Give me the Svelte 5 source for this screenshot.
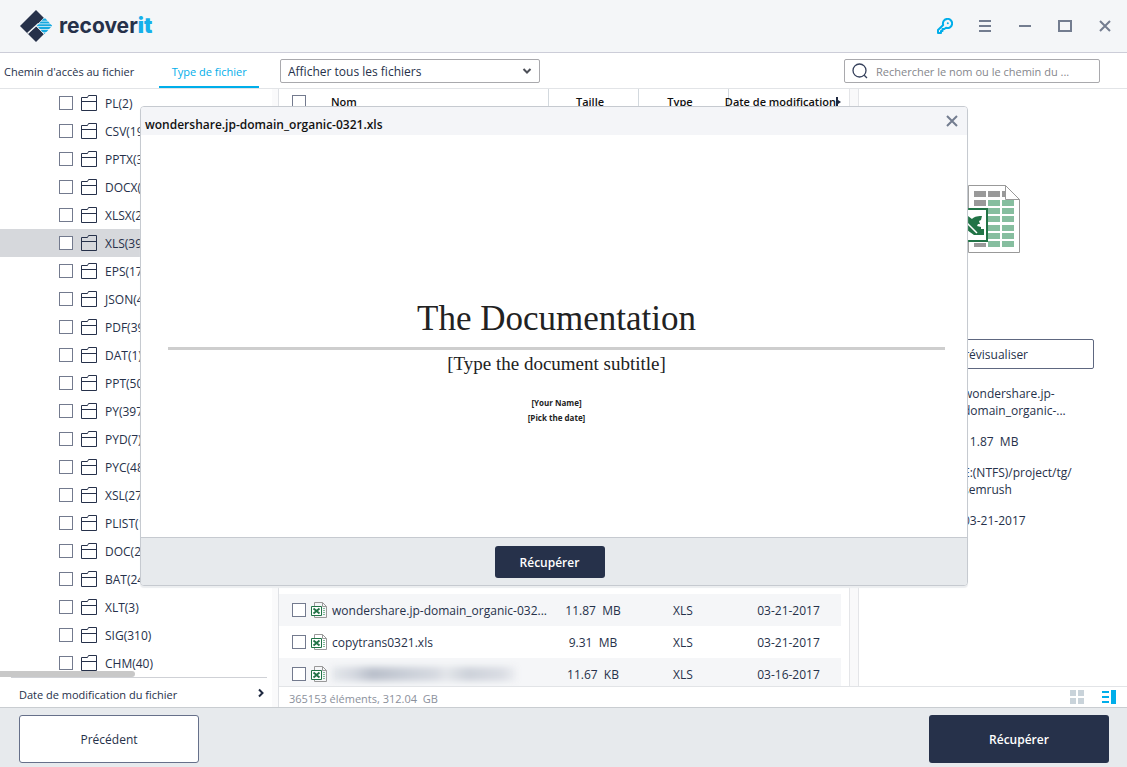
<script lang="ts">
    type FileRow = {
        name: string;
        size: string;
        type: string;
        date: string;
        masked?: boolean;
    };

    const folders = [
        'PL(2)',
        'CSV(19)',
        'PPTX(3)',
        'DOCX(1)',
        'XLSX(2)',
        'XLS(39)',
        'EPS(17)',
        'JSON(4)',
        'PDF(39)',
        'DAT(1)',
        'PPT(50)',
        'PY(397)',
        'PYD(7)',
        'PYC(48)',
        'XSL(27)',
        'PLIST(1)',
        'DOC(2)',
        'BAT(24)',
        'XLT(3)',
        'SIG(310)',
        'CHM(40)'
    ];

    const files: FileRow[] = [
        { name: 'wondershare.jp-domain_organic-032...', size: '11.87  MB', type: 'XLS', date: '03-21-2017' },
        { name: 'copytrans0321.xls', size: '9.31  MB', type: 'XLS', date: '03-21-2017' },
        { name: '', size: '11.67  KB', type: 'XLS', date: '03-16-2017', masked: true }
    ];

    let selected = $state('XLS(39)');
    let search = $state('');
    let showPreview = $state(true);
</script>

{#snippet sheetIcon()}
    <svg class="sheet" width="16" height="16" viewBox="0 0 16 16" fill="none" aria-hidden="true">
        <path d="M3.5 4V.5h8l4 4v11h-12V13" stroke="#999" />
        <path d="M11.5.5v4h4" stroke="#999" />
        <path d="M12 6.5h2M12 8.5h2M12 10.5h2M12 12.5h2" stroke="#7dbb98" />
        <path d="M.5 4.500h10v9H.5z" fill="#fff" stroke="#217346" />
        <path d="m2.500 6.500 6 5M8.500 6.500l-6 5" stroke="#217346" stroke-width="1.800" />
    </svg>
{/snippet}

<div class="app">
    <header class="titlebar">
        <div class="brand">
            <svg width="32" height="32" viewBox="0 0 32 32" aria-hidden="true">
                <path d="M16 0 24 8 8 24 0 16z" fill="#26314a" />
                <path d="m8 24 8-8 8 8-8 8z" fill="#26314a" />
                <path d="m7.5 23.5 11-10" stroke="#f4f6f8" stroke-width="1.5" />
                <path d="m16 16 8.500-9 8.500 9-8.500 9z" fill="#f4f6f8" />
                <path
                    d="M23.500 8.500h2l2 2.200h-6zM20.800 11.400h7.400l1.800 2h-11zM18.300 14.200h12.400l1.300 1.200v.8H17v-.8zM18 17h13l-1.800 2h-9.400zM20.500 19.800h8l-2 2.200h-4zM23.200 22.600h2.600l-1.300 1.400z"
                    fill="#16a9e0"
                />
            </svg>
            <span class="brand-name">recover<b>it</b></span>
        </div>
        <div class="window-buttons">
            <button aria-label="Licence">
                <svg width="16" height="16" viewBox="0 0 16 16" fill="none" stroke="#00aeea" stroke-width="2">
                    <path d="M6.2 7A4.600 4.600 0 1 1 9 9.8L7.3 11H5.5v2H4v2H1v-3z" stroke-linejoin="round" />
                    <circle cx="10.8" cy="5.2" r="1" fill="#00aeea" stroke="none" />
                </svg>
            </button>
            <button aria-label="Menu">
                <svg width="16" height="16" viewBox="0 0 16 16" stroke="#737d90" stroke-width="2">
                    <path d="M2 3h12M2 8h12M2 13h12" />
                </svg>
            </button>
            <button aria-label="Réduire">
                <svg width="16" height="16" viewBox="0 0 16 16" stroke="#737d90" stroke-width="2">
                    <path d="M2 8h12" />
                </svg>
            </button>
            <button aria-label="Agrandir">
                <svg width="16" height="16" viewBox="0 0 16 16" fill="none" stroke="#737d90" stroke-width="2">
                    <path d="M2 3h12v10H2z" />
                </svg>
            </button>
            <button aria-label="Fermer">
                <svg width="16" height="16" viewBox="0 0 16 16" stroke="#737d90" stroke-width="2">
                    <path d="m3 3 10 10M13 3 3 13" />
                </svg>
            </button>
        </div>
    </header>

    <div class="toolbar">
        <nav class="tabs">
            <button class="tab">Chemin d'accès au fichier</button>
            <button class="tab active">Type de fichier</button>
        </nav>
        <div class="filter">
            <select aria-label="Filtre">
                <option>Afficher tous les fichiers</option>
            </select>
            <svg width="10" height="8" viewBox="0 0 10 8" fill="none" stroke="#4c4f57" stroke-width="2">
                <path d="m1.5 2 3.5 3.5L8.5 2" />
            </svg>
        </div>
        <label class="search">
            <svg width="16" height="16" viewBox="0 0 16 16" fill="none" stroke="#36415c" stroke-width="1.3">
                <circle cx="7.5" cy="7.5" r="6.5" />
                <path d="m12.2 12.2 2.8 2.8" />
            </svg>
            <input type="text" bind:value={search} placeholder="Rechercher le nom ou le chemin du ..." />
        </label>
    </div>

    <main class="main">
        <aside class="sidebar">
            <ul class="tree">
                {#each folders as folder}
                    <li class:selected={folder === selected}>
                        <input type="checkbox" aria-label={folder} />
                        <button class="folder" onclick={() => (selected = folder)}>
                            <svg width="16" height="16" viewBox="0 0 16 16" fill="none" stroke="#26314a" aria-hidden="true">
                                <path d="M.5 2.5h6l1-2h8v15H.5zM.5 6.5h15" />
                            </svg>
                            <span>{folder}</span>
                        </button>
                    </li>
                {/each}
            </ul>
            <div class="tree-scroll"></div>
            <button class="date-filter">
                <span>Date de modification du fichier</span>
                <svg width="6" height="10" viewBox="0 0 6 10" fill="none" stroke="#1f2940" stroke-width="2">
                    <path d="m1 1.5 3.5 3.5L1 8.5" />
                </svg>
            </button>
        </aside>

        <section class="content">
            <div class="panes">
                <div class="list">
                    <table>
                        <thead>
                            <tr>
                                <th class="check"><input type="checkbox" aria-label="Tout sélectionner" /></th>
                                <th class="name">Nom</th>
                                <th class="size">Taille</th>
                                <th class="type">Type</th>
                                <th class="date">
                                    <div class="sort">
                                        <span>Date de modification</span>
                                        <svg width="5" height="10" viewBox="0 0 5 10" fill="#1f2940">
                                            <path d="M0 0h2v3l3 2-3 2v3H0z" />
                                        </svg>
                                    </div>
                                </th>
                            </tr>
                        </thead>
                        <tbody>
                            <tr class="spacer"><td colspan="5"></td></tr>
                            {#each files as file}
                                <tr>
                                    <td class="check"><input type="checkbox" aria-label={file.name || file.type} /></td>
                                    <td>
                                        <div class="file">
                                            {@render sheetIcon()}
                                            {#if file.masked}
                                                <span class="masked"></span>
                                            {:else}
                                                <span>{file.name}</span>
                                            {/if}
                                        </div>
                                    </td>
                                    <td>{file.size}</td>
                                    <td>{file.type}</td>
                                    <td class="modified">{file.date}</td>
                                </tr>
                            {/each}
                        </tbody>
                    </table>
                </div>
                <div class="splitter"></div>
                <div class="details">
                    <svg class="details-icon" width="72" height="68" viewBox="0 0 72 68" fill="none" aria-hidden="true">
                        <path d="M20.5.5h37l14 14v53h-51z" fill="#fff" stroke="#999" />
                        <path d="M26 6h12v6H26zM40 6h12v6H40zM54 6h4v6h-4zM26 15h12v6H26zM26 58h12v4H26z" fill="#999" />
                        <path
                            d="M40 15h12v6H40zM54 15h12v6H54zM40 23h12v6H40zM54 23h12v6H54zM40 31h12v6H40zM54 31h12v6H54zM40 40h12v6H40zM54 40h12v6H54zM40 48h12v6H40zM54 48h12v6H54zM40 56h12v6H40zM54 56h12v6H54z"
                            fill="#86be9f"
                        />
                        <path d="M57.5.5v14h14z" fill="#fff" stroke="#999" />
                        <path d="M1 24h38v32H1z" fill="#fff" stroke="#217346" stroke-width="2" />
                        <path
                            d="M10 31h10l4 3c2-2 4-3 10-3l-1 4-2 1 1 3h-2l-1 2 4 1v2h3v6h-10l-7-5-4 4H8l8-9z"
                            fill="#217346"
                        />
                        <path d="m18 37 11 11" stroke="#fff" stroke-width="1.500" />
                    </svg>
                    <button class="preview-button" onclick={() => (showPreview = true)}>Prévisualiser</button>
                    <div class="info">
                        <p>wondershare.jp-<br />domain_organic-...</p>
                        <p>11.87  MB</p>
                        <p>E:(NTFS)/project/tg/<br />semrush</p>
                        <p>03-21-2017</p>
                    </div>
                </div>
            </div>
            <div class="status">
                <span>365153 éléments, 312.04  GB</span>
                <div class="views">
                    <button aria-label="Vue en grille">
                        <svg width="14" height="14" viewBox="0 0 14 14" fill="#c9d3da">
                            <path d="M0 0h6v6H0zM8 0h6v6H8zM0 8h6v6H0zM8 8h6v6H8z" />
                        </svg>
                    </button>
                    <button aria-label="Vue en liste">
                        <svg width="14" height="14" viewBox="0 0 14 14" fill="#00aeea">
                            <path d="M0 1h7v2H0zM0 6h7v2H0zM0 11h7v2H0zM9 0h5v14H9z" />
                        </svg>
                    </button>
                </div>
            </div>
        </section>
    </main>

    <footer class="footer">
        <button class="secondary">Précédent</button>
        <button class="primary">Récupérer</button>
    </footer>

    {#if showPreview}
        <div class="overlay">
            <div class="modal" role="dialog" aria-labelledby="preview-title">
                <div class="modal-header">
                    <span id="preview-title">wondershare.jp-domain_organic-0321.xls</span>
                    <button aria-label="Fermer l'aperçu" onclick={() => (showPreview = false)}>
                        <svg width="12" height="12" viewBox="0 0 12 12" stroke="#737d90" stroke-width="2">
                            <path d="m1 1 10 10M11 1 1 11" />
                        </svg>
                    </button>
                </div>
                <div class="document">
                    <h1>The Documentation</h1>
                    <hr />
                    <h2>[Type the document subtitle]</h2>
                    <p>[Your Name]</p>
                    <p>[Pick the date]</p>
                </div>
                <div class="modal-footer">
                    <button class="primary">Récupérer</button>
                </div>
            </div>
        </div>
    {/if}
</div>

<style>
    :global(body) {
        background: #fff;
    }

    .app {
        position: relative;
        display: flex;
        flex-direction: column;
        height: 100vh;
        overflow: hidden;
        font-family: 'Open Sans', 'Noto Sans', sans-serif;
        font-size: 12px;
        color: #26314a;
    }

    .app * {
        box-sizing: border-box;
    }

    button,
    input,
    select {
        font: inherit;
        color: inherit;
    }

    button {
        padding: 0;
        border: none;
        background: none;
        cursor: pointer;
    }

    svg {
        display: block;
        flex-shrink: 0;
    }

    input[type='checkbox'] {
        appearance: none;
        display: block;
        flex-shrink: 0;
        width: 14px;
        height: 14px;
        margin: 0;
        border: 1px solid #737a8e;
        background: #fff;
    }

    input[type='checkbox']:checked {
        background: #00aeea;
    }

    /* Title bar */
    .titlebar {
        display: flex;
        align-items: center;
        justify-content: space-between;
        height: 53px;
        flex-shrink: 0;
        padding: 0 2px 0 20px;
        background: #f4f6f8;
        border-bottom: 1px solid #cccdd8;
    }

    .brand {
        display: flex;
        align-items: center;
        gap: 7px;
    }

    .brand-name {
        font-family: Inter, sans-serif;
        font-size: 21px;
        font-weight: 700;
        line-height: 28px;
    }

    .brand-name b {
        color: #16b0ea;
    }

    .window-buttons {
        display: flex;
    }

    .window-buttons button {
        display: flex;
        align-items: center;
        justify-content: center;
        width: 40px;
        height: 40px;
    }

    /* Tabs, filter and search */
    .toolbar {
        display: flex;
        align-items: center;
        height: 36px;
        flex-shrink: 0;
        border-bottom: 1px solid #e2e4e7;
    }

    .tabs {
        display: flex;
        align-self: stretch;
        width: 280px;
        padding-left: 4px;
        gap: 25px;
        font-size: 11px;
    }

    .tab {
        padding-top: 2px;
    }

    .tab.active {
        width: 100px;
        padding-top: 4px;
        border-bottom: 2px solid #00aeea;
        color: #00aeea;
    }

    .filter {
        position: relative;
        width: 260px;
    }

    .filter select {
        appearance: none;
        display: block;
        width: 100%;
        height: 24px;
        padding: 2px 7px 0;
        border: 1px solid #a9a9ad;
        border-radius: 2px;
        background: #fff;
    }

    .filter svg {
        position: absolute;
        top: 8px;
        right: 8px;
        pointer-events: none;
    }

    .search {
        display: flex;
        align-items: center;
        gap: 8px;
        width: 256px;
        height: 24px;
        margin-left: auto;
        margin-right: 27px;
        padding: 0 7px;
        border: 1px solid #a9a9ad;
        border-radius: 2px;
        font-size: 11px;
    }

    .search input {
        flex: 1;
        min-width: 0;
        padding: 2px 0 0;
        border: none;
        outline: none;
        background: none;
    }

    .search input::placeholder {
        color: #85868c;
    }

    .main {
        display: flex;
        flex: 1;
        min-height: 0;
    }

    /* Sidebar */
    .sidebar {
        position: relative;
        display: flex;
        flex-direction: column;
        width: 279px;
        flex-shrink: 0;
        border-right: 1px solid #dfe1e5;
        box-shadow: inset -6px 0 #fafafb;
    }

    .tree {
        flex: 1;
        min-height: 0;
        margin: 0;
        padding: 0;
        overflow: hidden;
        list-style: none;
    }

    .tree li {
        display: flex;
        align-items: center;
        gap: 8px;
        height: 28px;
        padding-left: 59px;
    }

    .tree li.selected {
        background: #d6d8dc;
    }

    .folder {
        display: flex;
        align-items: center;
        gap: 8px;
    }

    .folder span {
        padding-top: 2px;
        line-height: 18px;
    }

    .tree-scroll {
        position: absolute;
        left: 0;
        bottom: 30px;
        width: 135px;
        height: 6px;
        border-radius: 0 3px 3px 0;
        background: #c8c8c8;
    }

    .date-filter {
        display: flex;
        align-items: center;
        justify-content: space-between;
        height: 30px;
        flex-shrink: 0;
        margin: 0 11px;
        padding: 0 3px 0 8px;
        border-top: 1px solid #cfd1d6;
        font-size: 11px;
    }

    .date-filter span {
        padding-top: 4px;
    }

    /* File list */
    .content {
        display: flex;
        flex-direction: column;
        flex: 1;
        min-width: 0;
    }

    .panes {
        display: flex;
        flex: 1;
        min-height: 0;
    }

    .list {
        flex: 1;
        min-width: 0;
        padding-right: 8px;
        overflow: hidden;
    }

    table {
        width: 100%;
        table-layout: fixed;
        border-collapse: collapse;
        text-align: center;
    }

    th {
        height: 25px;
        padding: 0 6px 0 0;
        border-right: 1px solid #d3d9de;
        color: #111;
        font-size: 11px;
        font-weight: 600;
    }

    th.check,
    th.date {
        padding-right: 0;
        border-right: none;
    }

    th.name {
        padding-left: 20px;
        text-align: left;
    }

    .check {
        width: 32px;
        padding-left: 13px;
    }

    .size,
    .type {
        width: 90px;
    }

    .date {
        width: 113px;
    }

    .sort {
        display: flex;
        align-items: center;
        justify-content: flex-end;
        white-space: nowrap;
    }

    td {
        height: 32px;
        padding: 0;
        white-space: pre;
    }

    td.modified {
        padding-left: 8px;
    }

    .spacer td {
        height: 480px;
    }

    tbody tr:nth-child(even) {
        background: #f5f6f8;
    }

    .file {
        display: flex;
        align-items: center;
        gap: 5px;
    }

    .masked {
        width: 184px;
        height: 14px;
        background: linear-gradient(90deg, #e4e7eb, #d3d7df 12%, #b9bfca 22%, #c9ced7 40%, #d5d9e0 56%, #e3e6ea 62%, #ccd1d9 74%, #d9dce3 92%, #eceef1);
        filter: blur(3px);
    }

    .splitter {
        width: 10px;
        border: solid #e4e5e8;
        border-width: 0 1px;
        background: #f9f9fa;
    }

    /* Selected file */
    .details {
        display: flex;
        flex-direction: column;
        width: 268px;
        padding: 96px 33px 0 32px;
    }

    .details-icon {
        margin-left: 57px;
    }

    .preview-button {
        height: 30px;
        margin-top: 86px;
        border: 1px solid #5e6780;
        border-radius: 2px;
    }

    .info {
        display: flex;
        flex-direction: column;
        gap: 14px;
        margin-top: 16px;
        padding-left: 72px;
        line-height: 17px;
        white-space: pre;
    }

    .info p {
        margin: 0;
    }

    .status {
        display: flex;
        align-items: center;
        justify-content: space-between;
        height: 21px;
        flex-shrink: 0;
        padding: 0 11px 0 10px;
        border-top: 1px solid #e2e4e7;
        color: #8b909b;
        font-size: 11px;
        white-space: pre;
    }

    .status span {
        padding-top: 2px;
    }

    .views {
        display: flex;
        gap: 18px;
    }

    /* Bottom bar */
    .footer {
        display: flex;
        justify-content: space-between;
        height: 60px;
        flex-shrink: 0;
        padding: 7px 18px 4px 19px;
        border-top: 1px solid #c9cdd1;
        background: #e7eaed;
    }

    .footer button {
        width: 180px;
        height: 48px;
    }

    .secondary {
        border: 1px solid #66708a;
        border-radius: 3px;
        background: #fff;
    }

    .primary {
        border-radius: 3px;
        background: #26314a;
        color: #fff;
        font-weight: 600;
    }

    /* Preview dialog */
    .overlay {
        position: absolute;
        inset: 0;
        padding: 106px 159px 0 140px;
        pointer-events: none;
    }

    .modal {
        display: flex;
        flex-direction: column;
        border: 1px solid #c6cad0;
        border-radius: 4px;
        background: #fff;
        box-shadow: 0 2px 1px #eceef0;
        overflow: hidden;
        pointer-events: auto;
    }

    .modal-header {
        display: flex;
        align-items: center;
        justify-content: space-between;
        height: 28px;
        padding: 0 9px 0 4px;
        background: #f4f5f8;
        color: #111;
        font-weight: 600;
    }

    .modal-header span {
        padding-top: 7px;
    }

    .document {
        height: 402px;
        padding: 162px 22px 0 27px;
        color: #222;
        font-family: 'Liberation Serif', serif;
        text-align: center;
    }

    .document h1 {
        margin: 0;
        font-size: 35px;
        font-weight: 400;
        line-height: 44px;
    }

    .document hr {
        height: 3px;
        margin: 6px 0 2px;
        border: none;
        background: #cecece;
    }

    .document h2 {
        margin: 0 0 19px;
        font-size: 19px;
        font-weight: 400;
        line-height: 24px;
    }

    .document p {
        margin: 0;
        font-family: 'Open Sans', sans-serif;
        font-size: 8px;
        font-weight: 700;
        line-height: 15px;
    }

    .modal-footer {
        display: flex;
        justify-content: center;
        height: 48px;
        padding: 8px 9px 0 0;
        border-top: 1px solid #c6cad0;
        background: #e7eaed;
    }

    .modal-footer button {
        width: 110px;
        height: 32px;
    }
</style>
